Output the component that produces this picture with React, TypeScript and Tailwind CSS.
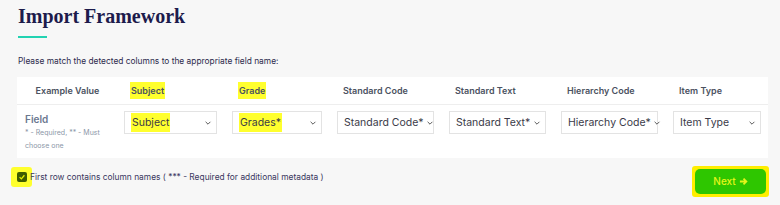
import React from "react";

const cols = [
  { label: "Subject", value: "Subject", hl: true },
  { label: "Grade", value: "Grades*", hl: true },
  { label: "Standard Code", value: "Standard Code*", hl: false },
  { label: "Standard Text", value: "Standard Text*", hl: false },
  { label: "Hierarchy Code", value: "Hierarchy Code*", hl: false },
  { label: "Item Type", value: "Item Type", hl: false },
];

const Chevron = () => (
  <svg width="8" height="8" viewBox="0 0 10 10" className="shrink-0 text-[#555]">
    <path d="M2 3.5 L5 6.5 L8 3.5" fill="none" stroke="currentColor" strokeWidth="1.2" />
  </svg>
);

const App: React.FC = () => {
  return (
    <div
      className="w-[780px] h-[205px] bg-[#f7f7f7] overflow-hidden text-[#2d2b4d]"
      style={{ fontFamily: "Inter, 'Noto Sans', sans-serif" }}
    >
      {/* Title */}
      <div className="pl-[18px] pt-[3px]">
        <h1
          className="text-[20px] leading-[26px] font-bold text-[#1d1b4c]"
          style={{ fontFamily: "'Liberation Serif', 'DejaVu Serif', serif" }}
        >
          Import Framework
        </h1>
        <div className="mt-[7px] w-[29px] h-[2px] bg-[#22d3b2]" />
      </div>

      <p className="pl-[18px] mt-[17px] text-[8.4px] leading-[12px] text-[#2d2b4d]">
        Please match the detected columns to the appropriate field name:
      </p>

      {/* Mapping table */}
      <div className="ml-[17px] mt-[10px] w-[751px] h-[81px] bg-white">
        <div className="grid grid-cols-[99px_108px_105px_112px_112px_112px_1fr] h-[28px] border-b border-[#eeeeee] items-center text-[9px] font-semibold text-[#4b5261]">
          <div className="text-center pl-[2px]">Example Value</div>
          {cols.map((c) => (
            <div key={c.label} className="pl-[14px]">
              <span className={c.hl ? "bg-[#ffff2e] px-[1px] py-[3px]" : ""}>{c.label}</span>
            </div>
          ))}
        </div>
        <div className="grid grid-cols-[99px_108px_105px_112px_112px_112px_1fr] pt-[6px]">
          <div className="pl-[8px] pt-[1px]">
            <div className="text-[10px] leading-[14px] font-semibold text-[#6b7890]">Field</div>
            <div className="text-[7px] leading-[13px] text-[#8c97a8]">
              * - Required, ** - Must
              <br />
              choose one
            </div>
          </div>
          {cols.map((c) => (
            <div key={c.label} className="pl-[8px] pr-[7px]">
              <div className="h-[23px] border border-[#e3e3e3] bg-white flex items-center justify-between gap-[2px] pl-[6px] pr-[4px] text-[10.5px] text-[#3a3a48]">
                <span className={c.hl ? "bg-[#ffff2e] px-[1px] py-[2px] whitespace-nowrap" : "whitespace-nowrap"}>
                  {c.value}
                </span>
                <Chevron />
              </div>
            </div>
          ))}
        </div>
      </div>

      {/* Footer */}
      <div className="flex items-start justify-between mt-[8px] pr-[11px]">
        <div className="flex items-center pl-[11px] mt-[1px]">
          <div className="w-[21px] h-[20px] bg-[#ffff2e] rounded-[3px] flex items-center justify-center">
            <div className="w-[10px] h-[10px] bg-[#3f5c00] rounded-[2px] flex items-center justify-center">
              <svg width="8" height="8" viewBox="0 0 10 10">
                <path d="M2 5.2 L4.2 7.3 L8 2.8" fill="none" stroke="#e8f200" strokeWidth="1.6" />
              </svg>
            </div>
          </div>
          <span className="text-[8.4px] text-[#3a3860] -ml-[2px]">
            First row contains column names ( *** - Required for additional metadata )
          </span>
        </div>
        <div className="p-[3px] bg-[#ffee00] rounded-[3px]">
          <button className="w-[71px] h-[25px] rounded-[5px] bg-[#2ec600] text-[10px] font-medium text-[#e4f51a] flex items-center justify-center gap-[3px]">
            Next
            <svg width="9" height="9" viewBox="0 0 10 10">
              <path d="M1 5 H8 M5 1.8 L8.2 5 L5 8.2" fill="none" stroke="#e4f51a" strokeWidth="2" />
            </svg>
          </button>
        </div>
      </div>
    </div>
  );
};

export default App;
